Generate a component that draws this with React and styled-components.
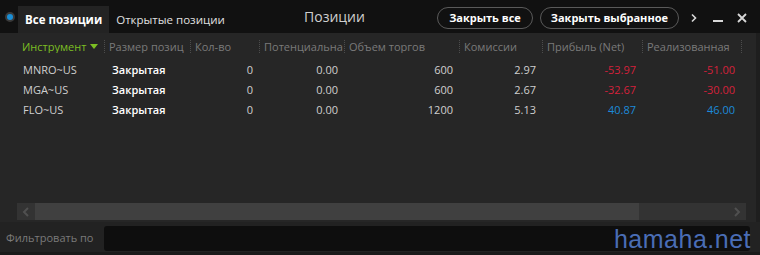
import React from 'react'
import styled, { createGlobalStyle } from 'styled-components'

const Global = createGlobalStyle`
  html, body { margin: 0; padding: 0; background: #1b1b1b; }
  body { font-family: "Open Sans", "Noto Sans", sans-serif; }
`;

const Window = styled.div`
  position: relative;
  width: 760px;
  height: 255px;
  background: #1b1b1b;
  overflow: hidden;
  display: flex;
  flex-direction: column;
`;

const TopBar = styled.div`
  height: 33px;
  background: #111111;
  display: flex;
  align-items: flex-end;
  flex-shrink: 0;
  padding-right: 6px;
`;

const Dot = styled.span`
  width: 6px;
  height: 6px;
  border-radius: 50%;
  background: #1a8fd6;
  border: 2px solid #3a3a3a;
  margin: 0 3px 11px 5px;
  align-self: flex-end;
`;

const Tab = styled.div`
  height: 27px;
  display: flex;
  align-items: center;
  padding: 0 7px;
  font-size: 11.5px;
  color: ${p => (p.$active ? '#ffffff' : '#e0e0e0')};
  font-weight: ${p => (p.$active ? 700 : 400)};
  background: ${p => (p.$active ? '#232323' : 'transparent')};
`;

const Title = styled.div`
  flex: 1;
  align-self: center;
  text-align: center;
  font-size: 14px;
  color: #cfcfcf;
`;

const Actions = styled.div`
  align-self: center;
  display: flex;
  align-items: center;
  gap: 7px;
  margin-top: 2px;
`;

const PillButton = styled.button`
  height: 22px;
  box-sizing: border-box;
  border: 1.5px solid #5a5a5a;
  border-radius: 11px;
  background: #111;
  color: #fff;
  font-family: inherit;
  font-weight: 700;
  font-size: 11px;
  padding: 0 ${p => p.$pad}px;
  display: flex;
  align-items: center;
`;

const WindowIcons = styled.div`
  display: flex;
  align-items: center;
  margin-left: -4px;
`;

const IconBox = styled.span`
  width: 24px;
  display: flex;
  justify-content: center;
  color: #d8d8d8;
`;

const Panel = styled.div`
  height: 189px;
  background: #262626;
  padding: 0 0 2px 17px;
  box-sizing: border-box;
  display: flex;
  flex-direction: column;
  flex-shrink: 0;
  border-right: 4px solid #1e1e1e;
`;

const Table = styled.div`
  flex: 1;
`;

const COLS = '88px 86px 69px 85px 115px 83px 100px 99px';

const HeaderRow = styled.div`
  display: grid;
  grid-template-columns: ${COLS};
  height: 26px;
  align-items: center;
  font-size: 11px;
  color: #7a7a7a;
`;

const HeadCell = styled.div`
  display: flex;
  align-items: center;
  white-space: nowrap;
  overflow: hidden;
  padding-left: ${p => (p.$first ? 5 : 4)}px;
  color: ${p => (p.$active ? '#7cbf23' : '#7a7a7a')};
  border-right: 1px dotted #4c4c4c;
  height: 13px;
  line-height: 13px;
`;

const Caret = styled.span`
  width: 0;
  height: 0;
  border-left: 4px solid transparent;
  border-right: 4px solid transparent;
  border-top: 5px solid #7cbf23;
  margin-left: 4px;
`;

const Row = styled.div`
  display: grid;
  grid-template-columns: ${COLS};
  height: 20px;
  align-items: center;
  font-size: 11px;
  color: #cfcfcf;
`;

const Cell = styled.div`
  white-space: nowrap;
  padding: 0 ${p => (p.$num ? '7px' : '0')} 0 ${p => (p.$num ? '0' : '7px')};
  text-align: ${p => (p.$num ? 'right' : 'left')};
  color: ${p => p.$color || 'inherit'};
  font-weight: ${p => (p.$strong ? 600 : 400)};
`;

const ScrollBar = styled.div`
  height: 17px;
  margin-right: 10px;
  display: flex;
  background: #333333;
`;

const ScrollArrow = styled.div`
  width: 18px;
  display: flex;
  align-items: center;
  justify-content: center;
  background: #333333;
`;

const Thumb = styled.div`
  width: 604px;
  background: #404040;
`;

const Track = styled.div`
  flex: 1;
`;

const FilterRow = styled.div`
  height: 31px;
  display: flex;
  align-items: center;
  background: #222222;
  padding: 0 10px 0 6px;
  gap: 11px;
  border-bottom: 3px solid #1a1a1a;
`;

const FilterLabel = styled.span`
  font-size: 11px;
  color: #7a7a7a;
  white-space: nowrap;
`;

const FilterInput = styled.div`
  flex: 1;
  height: 25px;
  background: #0e0e0e;
  border-radius: 3px;
  margin-top: 2px;
`;

const Watermark = styled.div`
  position: absolute;
  right: 9px;
  bottom: 1px;
  font-family: "Liberation Sans", Arial, sans-serif;
  font-size: 25px;
  letter-spacing: 0.5px;
  color: #4a6db5;
`;

const Chevron = ({ dir }) => (
  <svg width="8" height="10" viewBox="0 0 8 10">
    <path d={dir === 'left' ? 'M6 1 L2 5 L6 9' : 'M2 1 L6 5 L2 9'} stroke="#505050" strokeWidth="2" fill="none" />
  </svg>
);

const headers = ['Инструмент', 'Размер позиц', 'Кол-во', 'Потенциальна', 'Объем торгов', 'Комиссии', 'Прибыль (Net)', 'Реализованная']

const RED = '#d4213b'
const BLUE = '#1c8ad9'

const rows = [
  { sym: 'MNRO~US', qty: '0', pot: '0.00', vol: '600', fee: '2.97', net: '-53.97', real: '-51.00' },
  { sym: 'MGA~US', qty: '0', pot: '0.00', vol: '600', fee: '2.67', net: '-32.67', real: '-30.00' },
  { sym: 'FLO~US', qty: '0', pot: '0.00', vol: '1200', fee: '5.13', net: '40.87', real: '46.00' },
]

const App = () => {
  return (
    <>
      <Global />
      <Window>
        <TopBar>
          <Dot />
          <Tab $active>Все позиции</Tab>
          <Tab>Открытые позиции</Tab>
          <Title>Позиции</Title>
          <Actions>
            <PillButton $pad={11}>Закрыть все</PillButton>
            <PillButton $pad={10}>Закрыть выбранное</PillButton>
            <WindowIcons>
              <IconBox>
                <svg width="8" height="10" viewBox="0 0 8 10"><path d="M2 1.5 L5.5 5 L2 8.5" stroke="#d8d8d8" strokeWidth="1.6" fill="none" /></svg>
              </IconBox>
              <IconBox>
                <svg width="10" height="10" viewBox="0 0 10 10"><rect x="0" y="7" width="10" height="2" fill="#d8d8d8" /></svg>
              </IconBox>
              <IconBox>
                <svg width="10" height="10" viewBox="0 0 10 10"><path d="M1 1 L9 9 M9 1 L1 9" stroke="#d8d8d8" strokeWidth="1.8" /></svg>
              </IconBox>
            </WindowIcons>
          </Actions>
        </TopBar>

        <Panel>
          <Table>
            <HeaderRow>
              {headers.map((h, i) => (
                <HeadCell key={h} $first={i === 0} $active={i === 0}>
                  {h}
                  {i === 0 && <Caret />}
                </HeadCell>
              ))}
            </HeaderRow>
            {rows.map(r => (
              <Row key={r.sym}>
                <Cell style={{ paddingLeft: 6 }}>{r.sym}</Cell>
                <Cell $strong $color="#ffffff">Закрытая</Cell>
                <Cell $num>{r.qty}</Cell>
                <Cell $num>{r.pot}</Cell>
                <Cell $num>{r.vol}</Cell>
                <Cell $num>{r.fee}</Cell>
                <Cell $num $color={r.net.startsWith('-') ? RED : BLUE}>{r.net}</Cell>
                <Cell $num $color={r.real.startsWith('-') ? RED : BLUE}>{r.real}</Cell>
              </Row>
            ))}
          </Table>
          <ScrollBar>
            <ScrollArrow><Chevron dir="left" /></ScrollArrow>
            <Thumb />
            <Track />
            <ScrollArrow><Chevron dir="right" /></ScrollArrow>
          </ScrollBar>
        </Panel>

        <FilterRow>
          <FilterLabel>Фильтровать по</FilterLabel>
          <FilterInput />
        </FilterRow>

        <Watermark>hamaha.net</Watermark>
      </Window>
    </>
  )
}

export default App
